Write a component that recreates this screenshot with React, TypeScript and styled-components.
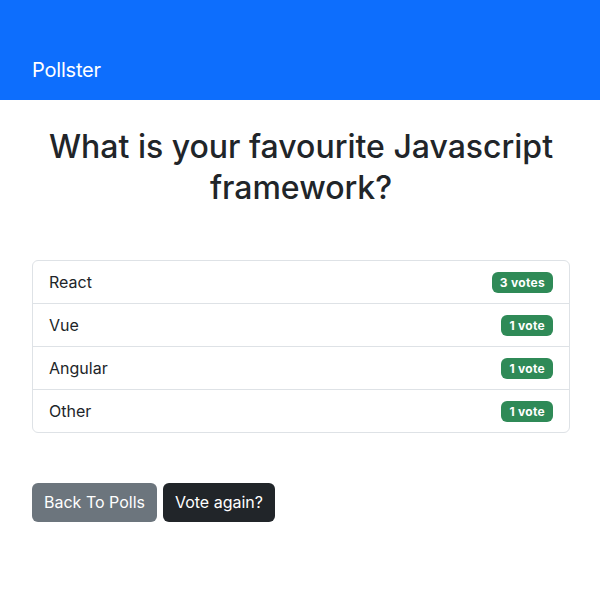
import React from 'react';
import styled, { createGlobalStyle } from 'styled-components';

const GlobalStyle = createGlobalStyle`
  * { box-sizing: border-box; }
  body {
    margin: 0;
    font-family: Inter, "Helvetica Neue", Arial, sans-serif;
    color: #212529;
    background: #fff;
  }
`;

const Navbar = styled.nav`
  height: 100px;
  background: #0d6efd;
  display: flex;
  align-items: flex-end;
  padding: 0 32px 15px;
`;

const Brand = styled.span`
  color: #fff;
  font-size: 20px;
  line-height: 30px;
  letter-spacing: -0.2px;
`;

const Container = styled.main`
  padding: 0 30px 0 32px;
`;

const Title = styled.h1`
  margin: 26px 0 52px;
  text-align: center;
  font-size: 32px;
  font-weight: 500;
  line-height: 41px;
`;

const ListGroup = styled.ul`
  list-style: none;
  margin: 0;
  padding: 0;
  border: 1px solid #dee2e6;
  border-radius: 6px;
`;

const ListItem = styled.li`
  display: flex;
  justify-content: space-between;
  align-items: center;
  padding: 0 16px;
  height: 42px;
  font-size: 16px;
  & + & {
    height: 43px;
    border-top: 1px solid #dee2e6;
  }
`;

const Badge = styled.span`
  background: #2f8a57;
  color: #fff;
  font-size: 12px;
  font-weight: 700;
  line-height: 1;
  letter-spacing: 0.3px;
  padding: 5px 8px 4px;
  border-radius: 6px;
`;

const Actions = styled.div`
  display: flex;
  gap: 6px;
  margin-top: 50px;
`;

const Button = styled.button<{ $variant: 'secondary' | 'dark' }>`
  font-family: inherit;
  font-size: 16px;
  line-height: 25px;
  padding: 7px 12px;
  border: none;
  border-radius: 6px;
  color: #fff;
  background: ${(p) => (p.$variant === 'secondary' ? '#6c757d' : '#212529')};
  cursor: pointer;
`;

const results = [
  { name: 'React', votes: 3 },
  { name: 'Vue', votes: 1 },
  { name: 'Angular', votes: 1 },
  { name: 'Other', votes: 1 },
];

const App: React.FC = () => {
  return (
    <>
      <GlobalStyle />
      <Navbar>
        <Brand>Pollster</Brand>
      </Navbar>
      <Container>
        <Title>What is your favourite Javascript framework?</Title>
        <ListGroup>
          {results.map((r) => (
            <ListItem key={r.name}>
              {r.name}
              <Badge>
                {r.votes} {r.votes === 1 ? 'vote' : 'votes'}
              </Badge>
            </ListItem>
          ))}
        </ListGroup>
        <Actions>
          <Button $variant="secondary">Back To Polls</Button>
          <Button $variant="dark">Vote again?</Button>
        </Actions>
      </Container>
    </>
  );
};

export default App;
